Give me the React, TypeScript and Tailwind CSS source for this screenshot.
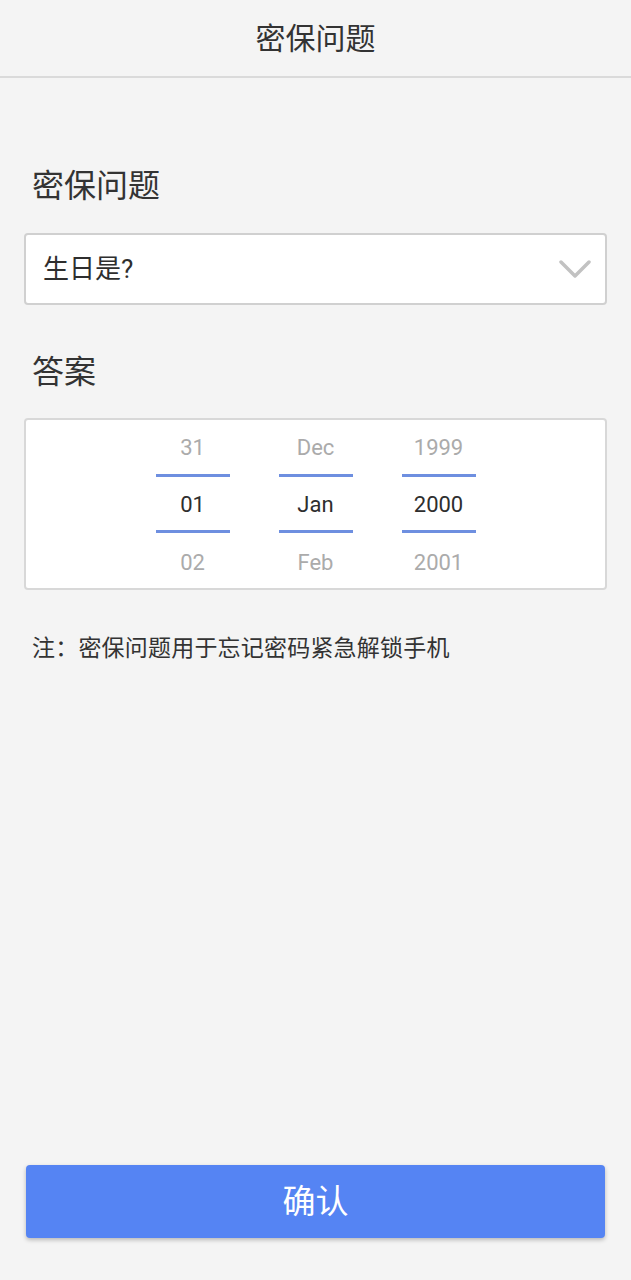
import React from "react";

const columns = [
  { prev: "31", cur: "01", next: "02" },
  { prev: "Dec", cur: "Jan", next: "Feb" },
  { prev: "1999", cur: "2000", next: "2001" },
];

function PickerColumn({ prev, cur, next }: { prev: string; cur: string; next: string }) {
  return (
    <div className="flex w-[74px] flex-col items-center">
      <div className="flex h-[56px] items-center pt-[3px] text-[22px] text-[#ababab]">{prev}</div>
      <div className="h-[3px] w-full bg-[#6e8fe0]" />
      <div className="flex h-[53px] items-center pt-[2px] text-[22px] text-[#2e2e2e]">{cur}</div>
      <div className="h-[3px] w-full bg-[#6e8fe0]" />
      <div className="flex h-[57px] items-center pt-[2px] text-[22px] text-[#ababab]">{next}</div>
    </div>
  );
}

export default function App() {
  return (
    <div
      className="flex h-[1280px] flex-col bg-[#f4f4f4]"
      style={{ fontFamily: 'Roboto, "Noto Sans CJK SC", sans-serif' }}
    >
      {/* Header */}
      <div className="flex h-[78px] items-center justify-center border-b-2 border-[#dadada]">
        <span className="text-[30px] text-[#333]">密保问题</span>
      </div>

      <div className="px-[24px]">
        <div className="mt-[86px] pl-[8px] text-[32px] leading-[44px] text-[#333]">密保问题</div>

        {/* Question select */}
        <div className="mt-[25px] flex h-[72px] items-center justify-between rounded-[4px] border-2 border-[#d0d0d0] bg-white pl-[17px] pr-[14px]">
          <span className="text-[26px] text-[#2e2e2e]">生日是?</span>
          <svg width="32" height="18" viewBox="0 0 32 18" fill="none">
            <path d="M2 2l14 14L30 2" stroke="#c2c2c2" strokeWidth="3.5" strokeLinecap="round" strokeLinejoin="round" />
          </svg>
        </div>

        <div className="mt-[45px] pl-[8px] text-[32px] leading-[44px] text-[#333]">答案</div>

        {/* Date picker */}
        <div className="mt-[24px] flex h-[172px] items-center justify-center gap-[49px] rounded-[4px] border-2 border-[#d8d8d8] bg-white">
          {columns.map((c) => (
            <PickerColumn key={c.cur} {...c} />
          ))}
        </div>

        <div className="mt-[44px] pl-[8px] text-[23px] leading-[30px] tracking-[0.2px] text-[#333]">注：密保问题用于忘记密码紧急解锁手机</div>
      </div>

      {/* Confirm button */}
      <div className="mt-auto px-[26px] pb-[42px]">
        <button className="flex h-[73px] w-full items-center justify-center rounded-[4px] bg-[#5584f3] text-[33px] text-white shadow-[0_2px_4px_rgba(0,0,0,0.25)]">
          确认
        </button>
      </div>
    </div>
  );
}
